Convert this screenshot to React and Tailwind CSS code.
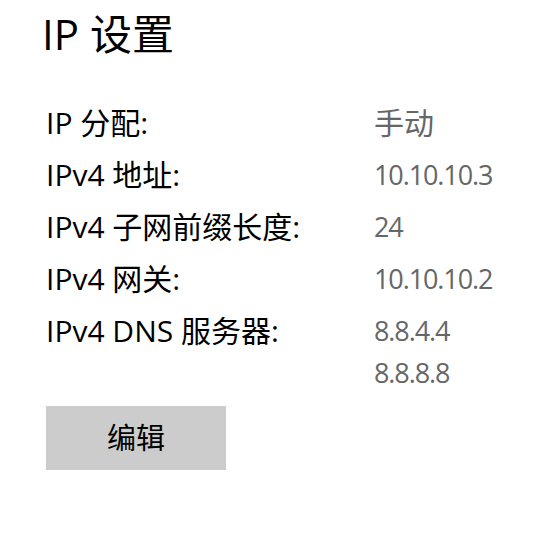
import React from "react";

const rows = [
  { label: "IP 分配:", values: ["手动"], cjk: true },
  { label: "IPv4 地址:", values: ["10.10.10.3"] },
  { label: "IPv4 子网前缀长度:", values: ["24"] },
  { label: "IPv4 网关:", values: ["10.10.10.2"] },
  { label: "IPv4 DNS 服务器:", values: ["8.8.4.4", "8.8.8.8"] },
];

const font = { fontFamily: '"Open Sans", "Noto Sans CJK SC", sans-serif' };

export default function App() {
  return (
    <div className="min-h-screen bg-white text-black" style={font}>
      <div className="pl-[42px] pt-[6px]">
        <h1 className="text-[42px] leading-[56px] font-normal">IP 设置</h1>
      </div>
      <div className="pl-[46px] pt-[40px] flex flex-col gap-[10px]">
        {rows.map((r) => (
          <div key={r.label} className="flex">
            <div className="w-[328px] text-[30px] leading-[42px]">{r.label}</div>
            <div
              className={`flex flex-col leading-[42px] text-[#666666] ${
                r.cjk ? "text-[30px]" : "text-[27px] tracking-[-1.1px]"
              }`}
            >
              {r.values.map((v) => (
                <div key={v}>{v}</div>
              ))}
            </div>
          </div>
        ))}
      </div>
      <div className="pl-[46px] pt-[12px]">
        <button className="w-[180px] h-[64px] bg-[#cccccc] text-[29px] text-black flex items-center justify-center">
          编辑
        </button>
      </div>
    </div>
  );
}
